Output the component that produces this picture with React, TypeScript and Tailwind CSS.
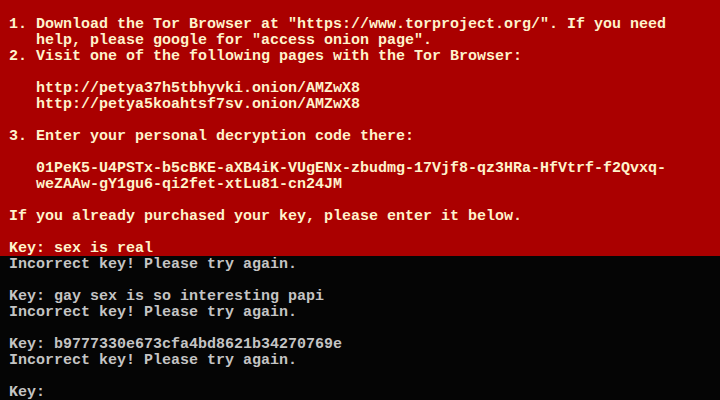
import React from "react";

const redLines = [
  "",
  ' 1. Download the Tor Browser at "https://www.torproject.org/". If you need',
  '    help, please google for "access onion page".',
  " 2. Visit one of the following pages with the Tor Browser:",
  "",
  "    http://petya37h5tbhyvki.onion/AMZwX8",
  "    http://petya5koahtsf7sv.onion/AMZwX8",
  "",
  " 3. Enter your personal decryption code there:",
  "",
  "    01PeK5-U4PSTx-b5cBKE-aXB4iK-VUgENx-zbudmg-17Vjf8-qz3HRa-HfVtrf-f2Qvxq-",
  "    weZAAw-gY1gu6-qi2fet-xtLu81-cn24JM",
  "",
  " If you already purchased your key, please enter it below.",
  "",
  " Key: sex is real",
];

const blackLines = [
  " Incorrect key! Please try again.",
  "",
  " Key: gay sex is so interesting papi",
  " Incorrect key! Please try again.",
  "",
  " Key: b9777330e673cfa4bd8621b34270769e",
  " Incorrect key! Please try again.",
  "",
  " Key:",
];

export default function App() {
  return (
    <div
      className="w-[720px] h-[400px] overflow-hidden flex flex-col text-[15px] font-bold"
      style={{ fontFamily: '"Liberation Mono", "DejaVu Sans Mono", monospace' }}
    >
      <div className="bg-[#aa0000] text-[#fff3cc] flex flex-col">
        {redLines.map((l, i) => (
          <div key={i} className="h-[16px] pt-px leading-[16px] whitespace-pre">
            {l}
          </div>
        ))}
      </div>
      <div className="bg-[#050505] text-[#c4c4c4] flex flex-col flex-1">
        {blackLines.map((l, i) => (
          <div key={i} className="h-[16px] pt-px leading-[16px] whitespace-pre">
            {l}
          </div>
        ))}
      </div>
    </div>
  );
}
